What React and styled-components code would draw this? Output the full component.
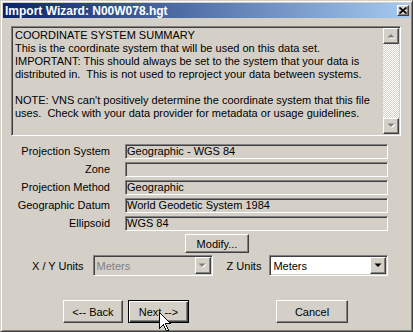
import React from 'react';
import styled, { createGlobalStyle, css } from 'styled-components';

const face = '#d4d0c8';

const Global = createGlobalStyle`
  html, body { margin: 0; padding: 0; background: ${face}; }
  body { font-family: "Liberation Sans", Arial, sans-serif; font-size: 11px; color: #000; }
`;

const raised = css`
  border: 1px solid;
  border-color: #fff #404040 #404040 #fff;
  box-shadow: inset -1px -1px #808080, inset 1px 1px ${face};
`;

const sunken = css`
  border: 1px solid;
  border-color: #808080 #fff #fff #808080;
  box-shadow: inset 1px 1px #404040, inset -1px -1px ${face};
`;

const Window = styled.div`
  position: relative;
  box-sizing: border-box;
  width: 413px;
  height: 332px;
  background: ${face};
  border: 1px solid;
  border-color: ${face} #404040 #404040 ${face};
  box-shadow: inset 1px 1px #fff, inset -1px -1px #808080;
  padding: 2px;
  display: flex;
  flex-direction: column;
  overflow: hidden;
`;

const TitleBar = styled.div`
  height: 15px;
  flex: none;
  display: flex;
  align-items: center;
  justify-content: space-between;
  padding-left: 2px;
  background: linear-gradient(to right, #0a246a, #a6caf0);
  color: #fff;
  font-weight: bold;
  font-size: 12px;
  white-space: nowrap;
`;

const CloseBtn = styled.div`
  box-sizing: border-box;
  width: 12px;
  height: 11px;
  margin-right: 1px;
  background: ${face};
  ${raised};
  display: flex;
  align-items: center;
  justify-content: center;
`;

const Body = styled.div`
  display: flex;
  flex-direction: column;
  padding: 8px 9px 0 8px;
`;

const SummaryBox = styled.div`
  box-sizing: border-box;
  height: 110px;
  display: flex;
  ${sunken};
  padding: 1px;
`;

const SummaryText = styled.div`
  flex: 1;
  padding: 1px 2px;
  white-space: pre;
  line-height: 13px;
  overflow: hidden;
`;

const ScrollBar = styled.div`
  width: 16px;
  display: flex;
  flex-direction: column;
  background: repeating-conic-gradient(#fff 0 25%, ${face} 0 50%) 0 0 / 2px 2px;
`;

const ScrollBtn = styled.div`
  box-sizing: border-box;
  width: 16px;
  height: 16px;
  background: ${face};
  ${raised};
  display: flex;
  align-items: center;
  justify-content: center;
`;

const Track = styled.div`
  flex: 1;
`;

const FieldGrid = styled.div`
  margin-top: 8px;
  display: grid;
  grid-template-columns: 99px 263px;
  column-gap: 15px;
  row-gap: 3px;
`;

const FieldLabel = styled.div`
  text-align: right;
  line-height: 15px;
  white-space: nowrap;
`;

const Field = styled.div`
  box-sizing: border-box;
  height: 15px;
  ${sunken};
  padding-left: 1px;
  line-height: 12px;
  white-space: nowrap;
`;

const ModifyRow = styled.div`
  margin-top: 3px;
  padding-left: 174px;
  display: flex;
`;

const Button = styled.div`
  box-sizing: border-box;
  width: ${p => p.$w}px;
  height: ${p => p.$h || 23}px;
  margin-left: ${p => p.$ml || 0}px;
  background: ${face};
  display: flex;
  align-items: center;
  justify-content: center;
  white-space: nowrap;
  ${p => p.$default ? css`
    border: 1px solid #000;
    box-shadow: inset 1px 1px #fff, inset -1px -1px #404040, inset -2px -2px #808080;
  ` : raised};
`;

const UnitsRow = styled.div`
  margin-top: 2px;
  padding-left: 21px;
  display: flex;
  align-items: center;
  height: 21px;
`;

const UnitLabel = styled.span`
  margin-left: ${p => p.$ml || 0}px;
  white-space: nowrap;
`;

const Combo = styled.div`
  box-sizing: border-box;
  width: ${p => p.$w}px;
  height: 21px;
  margin-left: ${p => p.$ml || 0}px;
  ${sunken};
  background: ${p => p.$disabled ? face : '#fff'};
  color: ${p => p.$disabled ? '#808080' : '#000'};
  display: flex;
  align-items: center;
  padding: 1px;
`;

const ComboText = styled.span`
  flex: 1;
  padding-left: 2px;
`;

const DropBtn = styled.div`
  box-sizing: border-box;
  width: 16px;
  height: 17px;
  background: ${face};
  ${raised};
  display: flex;
  align-items: center;
  justify-content: center;
`;

const ButtonRow = styled.div`
  margin-top: 24px;
  padding-left: 52px;
  display: flex;
`;

const Cursor = styled.svg`
  position: absolute;
  left: 158px;
  top: 311px;
`;

const Arrow = ({ dir = 'down', disabled }) => {
  const pts = dir === 'up' ? '0.5,4 3.5,0.5 7,4' : '0,0 7,0 3.5,4';
  const pd = dir === 'up' ? 'M0 4 L7 4 L3.5 0.5 Z' : 'M0 0 L7 0 L3.5 3.5 Z';
  return (
    <svg width="9" height="6" viewBox="-0.5 -0.5 9 6">
      {disabled && <path d={pd} transform="translate(1 1)" fill="#fff" />}
      <path d={pd} fill={disabled ? '#808080' : '#000'} />
    </svg>
  );
};

const summary = `COORDINATE SYSTEM SUMMARY
This is the coordinate system that will be used on this data set.
IMPORTANT: This should always be set to the system that your data is
distributed in.  This is not used to reproject your data between systems.

NOTE: VNS can't positively determine the coordinate system that this file
uses.  Check with your data provider for metadata or usage guidelines.`;

const fields = [
  ['Projection System', 'Geographic - WGS 84'],
  ['Zone', ''],
  ['Projection Method', 'Geographic'],
  ['Geographic Datum', 'World Geodetic System 1984'],
  ['Ellipsoid', 'WGS 84'],
];

export default function App() {
  return (
    <>
      <Global />
      <Window>
        <TitleBar>
          <span>Import Wizard: N00W078.hgt</span>
          <CloseBtn>
            <svg width="8" height="7" viewBox="0 0 8 7">
              <path d="M0.5 0.5 L7.5 6.5 M7.5 0.5 L0.5 6.5" stroke="#000" strokeWidth="1.6" />
            </svg>
          </CloseBtn>
        </TitleBar>
        <Body>
          <SummaryBox>
            <SummaryText>{summary}</SummaryText>
            <ScrollBar>
              <ScrollBtn><Arrow dir="up" disabled /></ScrollBtn>
              <Track />
              <ScrollBtn><Arrow dir="down" disabled /></ScrollBtn>
            </ScrollBar>
          </SummaryBox>
          <FieldGrid>
            {fields.map(([l, v]) => (
              <React.Fragment key={l}>
                <FieldLabel>{l}</FieldLabel>
                <Field>{v}</Field>
              </React.Fragment>
            ))}
          </FieldGrid>
          <ModifyRow>
            <Button $w={64} $h={19}>Modify...</Button>
          </ModifyRow>
          <UnitsRow>
            <UnitLabel>X / Y Units</UnitLabel>
            <Combo $w={120} $ml={9} $disabled>
              <ComboText>Meters</ComboText>
              <DropBtn><Arrow disabled /></DropBtn>
            </Combo>
            <UnitLabel $ml={14}>Z Units</UnitLabel>
            <Combo $w={119} $ml={8}>
              <ComboText>Meters</ComboText>
              <DropBtn><Arrow /></DropBtn>
            </Combo>
          </UnitsRow>
          <ButtonRow>
            <Button $w={60}>&lt;-- Back</Button>
            <Button $w={61} $ml={5} $default>Next --&gt;</Button>
            <Button $w={72} $ml={87}>Cancel</Button>
          </ButtonRow>
        </Body>
        <Cursor width="13" height="21" viewBox="0 0 13 21">
          <path d="M0.5 0.5 L0.5 16.5 L4.5 12.5 L7.5 19.5 L9.5 18.5 L6.5 11.5 L11.5 11.5 Z" fill="#fff" stroke="#000" strokeWidth="1" shapeRendering="crispEdges" />
        </Cursor>
      </Window>
    </>
  );
}
